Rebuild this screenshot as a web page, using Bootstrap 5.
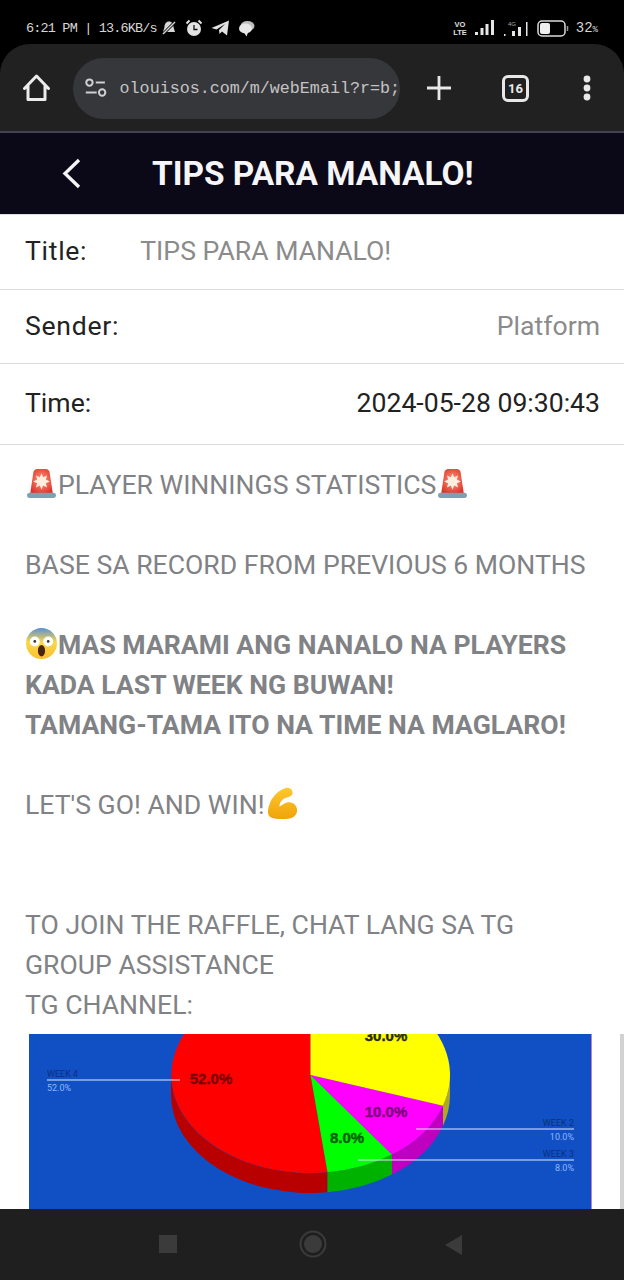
<!DOCTYPE html>
<html lang="en">
<head>
  <meta charset="UTF-8" />
  <title>TIPS PARA MANALO!</title>
  <meta name="viewport" content="width=device-width, initial-scale=1" />
  <link rel="stylesheet" href="https://cdn.jsdelivr.net/npm/bootstrap@5.3.0/dist/css/bootstrap.min.css" />
  <style>
    html, body { height: 1280px; overflow: hidden; }
    body { background: #000; font-family: Roboto, "Liberation Sans", sans-serif; }
    .phone { width: 624px; height: 1280px; }
    /* status bar */
    .status-bar { height: 44px; padding: 12px 26px 0 26px; color: #d6d6d6; font: 13.5px "Liberation Mono", monospace; }
    .status-clock { letter-spacing: -.83px; }
    /* browser toolbar */
    .browser-bar { height: 87px; background: #212121; border-radius: 30px 30px 0 0; padding: 1px 23px 0; }
    .url-pill { width: 327px; height: 61px; margin-left: 23px; background: #36373b; border-radius: 31px; padding-left: 11px; overflow: hidden; }
    .url-text { margin-left: 12px; color: #c4c4c4; font: 16.7px "Liberation Mono", monospace; white-space: nowrap; }
    .tab-count { width: 27px; height: 27px; border: 3px solid #e8e8e8; border-radius: 6px; color: #e8e8e8; font: 700 13px/21px Roboto, sans-serif; text-align: center; }
    /* app header */
    .app-header { height: 84px; background: #0b0818; border-top: 2px solid #45424f; border-bottom: 1px solid #dedde6; padding-left: 62px; }
    .app-title { margin: 0 0 0 71px; color: #f6f6f8; font: 700 33.4px Roboto, sans-serif; white-space: nowrap; }
    /* mail */
    .mail-page { background: #fff; min-height: 0; }
    .info-row { padding: 0 24px 2px 25px; border-bottom: 1px solid #dcdcdc; font-size: 26.6px; color: #222; }
    .row-title { height: 75px; }
    .row-sender { height: 74px; }
    .row-time { height: 81px; padding-bottom: 3px; }
    .wide-label { letter-spacing: .7px; }
    .title-value { margin-left: 53px; }
    .muted-value { color: #8b8b8b; }
    .mail-body { padding: 20px 20px 0 25px; color: #808285; font-size: 26.6px; line-height: 40px; white-space: nowrap; }
    .emoji { width: 33px; height: 33px; vertical-align: -6px; }
    .chart-wrap { margin: 9px 0 0 29px; width: 563px; height: 175px; }
    .chart-wrap svg { display: block; }
    .chart-name { fill: #0b2f7c; font: 9px Roboto, sans-serif; }
    .chart-val { fill: #8fb6ff; font: 9px Roboto, sans-serif; }
    .chart-pct { font: 700 15px "Liberation Sans", sans-serif; text-anchor: middle; stroke-width: .4px; }
    .scroll-thumb { right: 0; bottom: 0; width: 4px; height: 175px; background: #d2d2d2; }
    /* android nav */
    .nav-bar { height: 71px; background: #1f1f1f; }
  </style>
</head>
<body>
  <div class="phone d-flex flex-column">

    <div class="status-bar d-flex align-items-center justify-content-between">
      <div class="d-flex align-items-center">
        <span class="status-clock">6:21 PM | 13.6KB/s</span>
        <svg class="ms-1" width="16" height="16" viewBox="0 0 16 16"><path d="M8 1.500c-3 0-4.500 2.500-4.500 5.500L2 12h12l-1.500-5C12.500 4 11 1.500 8 1.500z" fill="#d6d6d6"/><path d="M2 14 14 2" stroke="#000" stroke-width="3"/><path d="M2 14 14 2" stroke="#d6d6d6" stroke-width="1.400"/></svg>
        <svg class="ms-2" width="18" height="18" viewBox="0 0 18 18"><circle cx="9" cy="10" r="7" fill="#e2e2e2"/><path d="M9 6v4.500h3.500" stroke="#111" stroke-width="1.300" fill="none"/><path d="M1.500 4.500 4.500 1.500M13.500 1.500l3 3" stroke="#e2e2e2" stroke-width="2"/></svg>
        <svg class="ms-2" width="19" height="16" viewBox="0 0 19 16"><path d="M0.500 8 18 0.500 16 15.500 11 11.500 8.500 14 8 10 14 4 5.500 9.500z" fill="#e2e2e2"/></svg>
        <svg class="ms-2" width="17" height="17" viewBox="0 0 17 17"><ellipse cx="9.500" cy="6" rx="7" ry="5" fill="#bdbdbd"/><ellipse cx="7.500" cy="8.500" rx="6.500" ry="5" fill="#e8e8e8"/><path d="M6 12.500h4L8.500 16.500z" fill="#e8e8e8"/></svg>
      </div>
      <div class="d-flex align-items-center">
        <svg width="16" height="16" viewBox="0 0 16 16"><text x="8" y="7" text-anchor="middle" fill="#e0e0e0" font-family="Liberation Sans" font-weight="700" font-size="7.500">VO</text><text x="8" y="15" text-anchor="middle" fill="#e0e0e0" font-family="Liberation Sans" font-weight="700" font-size="7.500">LTE</text></svg>
        <svg style="margin-left:7px" width="19" height="16" viewBox="0 0 19 16"><path d="M0 12h3v3H0zM5.500 8h3v7h-3zM10.500 4h3v11h-3zM16 0h3v15h-3z" fill="#e6e6e6"/></svg>
        <svg style="margin-left:9px" width="26" height="17" viewBox="0 0 26 17"><text x="5" y="6" fill="#aaa" font-family="Liberation Sans" font-size="6">4G</text><path d="M1 14h1.500v2H1zM9 11h3v5H9zM15 7h3v9h-3zM23 2h1.500v14H23z" fill="#e6e6e6"/></svg>
        <svg style="margin-left:8px" width="32" height="17" viewBox="0 0 32 17"><rect x="1" y="1" width="27" height="15" rx="4" fill="none" stroke="#dcdcdc" stroke-width="1.500"/><rect x="3" y="3" width="10" height="11" rx="2" fill="#f0f0f0"/><path d="M30.500 6v5" stroke="#999" stroke-width="1.500"/></svg>
        <span style="margin-left:7px;font-size:14px">32<small style="font-size:9px">%</small></span>
      </div>
    </div>

    <div class="browser-bar d-flex align-items-center">
      <svg width="27" height="28" viewBox="0 0 27 28"><path d="M1.500 14.500 13.500 2l12 12.500M5 12v13.500h17V12" fill="none" stroke="#ececec" stroke-width="3" stroke-linejoin="round" stroke-linecap="round"/></svg>
      <div class="url-pill d-flex align-items-center">
        <svg width="26" height="22" viewBox="0 0 26 22"><circle cx="6" cy="5" r="3.500" fill="none" stroke="#d0d0d0" stroke-width="2.200"/><path d="M13 5h10M2 16h12" stroke="#d0d0d0" stroke-width="2.200"/><circle cx="20" cy="16" r="3.500" fill="none" stroke="#d0d0d0" stroke-width="2.200"/></svg>
        <span class="url-text">olouisos.com/m/webEmail?r=b;</span>
      </div>
      <svg style="margin-left:26px" width="26" height="26" viewBox="0 0 26 26"><path d="M13 1v24M1 13h24" stroke="#e8e8e8" stroke-width="2.800"/></svg>
      <div class="tab-count" style="margin-left:50px">16</div>
      <svg style="margin-left:54px" width="8" height="26" viewBox="0 0 8 26"><circle cx="4" cy="4" r="3.400" fill="#e8e8e8"/><circle cx="4" cy="13" r="3.400" fill="#e8e8e8"/><circle cx="4" cy="22" r="3.400" fill="#e8e8e8"/></svg>
    </div>

    <div class="app-header d-flex align-items-center">
      <svg width="19" height="31" viewBox="0 0 19 31"><path d="M17 2 3 15.500 17 29" fill="none" stroke="#f4f4f4" stroke-width="3.400"/></svg>
      <h1 class="app-title">TIPS PARA MANALO!</h1>
    </div>

    <div class="mail-page flex-grow-1 position-relative overflow-hidden">
      <div class="info-row row-title d-flex align-items-center">
        <span class="wide-label">Title:</span>
        <span class="title-value muted-value">TIPS PARA MANALO!</span>
      </div>
      <div class="info-row row-sender d-flex align-items-center justify-content-between">
        <span class="wide-label">Sender:</span>
        <span class="muted-value">Platform</span>
      </div>
      <div class="info-row row-time d-flex align-items-center justify-content-between">
        <span>Time:</span>
        <span>2024-05-28 09:30:43</span>
      </div>

      <div class="mail-body">
        <svg width="0" height="0" class="position-absolute">
          <defs>
            <radialGradient id="sirenFill" cx=".5" cy=".45" r=".6"><stop offset="0" stop-color="#ff9a80"/><stop offset="1" stop-color="#df3326"/></radialGradient>
            <linearGradient id="faceFill" x1="0" y1="0" x2="0" y2="1"><stop offset="0" stop-color="#5a8fd8"/><stop offset=".45" stop-color="#f9d84a"/><stop offset="1" stop-color="#fbc02d"/></linearGradient>
            <linearGradient id="armFill" x1="0" y1="0" x2="0" y2="1"><stop offset="0" stop-color="#fdc92f"/><stop offset="1" stop-color="#f0a30a"/></linearGradient>
            <g id="sirenIcon">
              <path d="M8 6a4 4 0 0 1 4-4h8a4 4 0 0 1 4 4l3 20H5z" fill="url(#sirenFill)"/>
              <path d="M16 6l1.600 4 3.800-1.800-1.200 4 4 1.800-4 1.800 1.200 4-3.800-1.800-1.600 4-1.600-4-3.800 1.800 1.200-4-4-1.800 4-1.800-1.200-4 3.800 1.800z" fill="#ffeede"/>
              <rect x="2" y="25" width="28" height="5" rx="2.500" fill="#7f9fb2"/>
            </g>
          </defs>
        </svg>
        <svg class="emoji" viewBox="0 0 32 32" role="img" aria-label="siren"><use href="#sirenIcon"/></svg>PLAYER WINNINGS STATISTICS<svg class="emoji" viewBox="0 0 32 32" role="img" aria-label="siren"><use href="#sirenIcon"/></svg><br />
        <br />
        BASE SA RECORD FROM PREVIOUS 6 MONTHS<br />
        <br />
        <strong><svg class="emoji" viewBox="0 0 32 32" role="img" aria-label="screaming face"><circle cx="16" cy="16" r="15" fill="url(#faceFill)"/><circle cx="9.500" cy="14" r="4.800" fill="#fff"/><circle cx="22.500" cy="14" r="4.800" fill="#fff"/><circle cx="9.500" cy="14" r="1.300" fill="#333"/><circle cx="22.500" cy="14" r="1.300" fill="#333"/><ellipse cx="16" cy="23" rx="3.500" ry="5.500" fill="#4a2413"/></svg>MAS MARAMI ANG NANALO NA PLAYERS<br />
        KADA LAST WEEK NG BUWAN!<br />
        TAMANG-TAMA ITO NA TIME NA MAGLARO!</strong><br />
        <br />
        LET'S GO! AND WIN!<svg class="emoji" viewBox="0 0 32 32" role="img" aria-label="flexed biceps"><path d="M20 1C14 3 8 8 5 15 3 20 2 25 4 28c2 3 10 3 16 3 7 0 12-4 11-10-1-5-6-7-10-6-3 1-5 3-7 4 0-4 3-8 8-9 4-1 6-3 4-7-1-2-4-3-6-2z" fill="url(#armFill)"/></svg><br />
        <br />
        <br />
        TO JOIN THE RAFFLE, CHAT LANG SA TG<br />
        GROUP ASSISTANCE<br />
        TG CHANNEL:
      </div>

      <div class="chart-wrap">
        <svg width="563" height="175" viewBox="0 0 563 175">
          <rect width="563" height="175" fill="#1150c4"/>
          <rect x="562" width="1" height="175" fill="#c77ad6"/>
          <!-- side of the pie -->
          <path d="M142 41A139.500 98 0 0 0 298.500 138.300V158.300A139.500 98 0 0 1 142 61Z" fill="#b90000"/>
          <path d="M298.500 138.300A139.500 98 0 0 0 363 120.600V140.600A139.500 98 0 0 1 298.500 158.300Z" fill="#00b200"/>
          <path d="M363 120.600A139.500 98 0 0 0 414 71.700V91.700A139.500 98 0 0 1 363 140.600Z" fill="#c000c0"/>
          <path d="M414 71.700A139.500 98 0 0 0 421 41V61A139.500 98 0 0 1 414 91.700Z" fill="#b0a820"/>
          <!-- top of the pie -->
          <path d="M281.500 41V-57A139.500 98 0 1 0 298.500 138.300Z" fill="#ff0000"/>
          <path d="M281.500 41 298.500 138.300A139.500 98 0 0 0 363 120.600Z" fill="#00ff00"/>
          <path d="M281.500 41 363 120.600A139.500 98 0 0 0 414 71.700Z" fill="#ff00ff"/>
          <path d="M281.500 41 414 71.700A139.500 98 0 0 0 281.500 -57Z" fill="#ffff00"/>
          <!-- leader lines -->
          <path d="M18 46H151M387 95H545M329 126H545" stroke="#dfe9ff" stroke-width="1.200"/>
          <text class="chart-name" x="18" y="43">WEEK 4</text>
          <text class="chart-val" x="18" y="57">52.0%</text>
          <text class="chart-name" x="545" y="92" text-anchor="end">WEEK 2</text>
          <text class="chart-val" x="545" y="106" text-anchor="end">10.0%</text>
          <text class="chart-name" x="545" y="123" text-anchor="end">WEEK 3</text>
          <text class="chart-val" x="545" y="137" text-anchor="end">8.0%</text>
          <text class="chart-pct" x="182" y="50" fill="#7a0000" stroke="#7a0000">52.0%</text>
          <text class="chart-pct" x="357" y="7" fill="#2a2a00" stroke="#2a2a00">30.0%</text>
          <text class="chart-pct" x="357" y="83" fill="#7a007a" stroke="#7a007a">10.0%</text>
          <text class="chart-pct" x="318" y="109" fill="#006000" stroke="#006000">8.0%</text>
        </svg>
      </div>
      <div class="scroll-thumb position-absolute"></div>
    </div>

    <div class="nav-bar d-flex align-items-center position-relative">
      <svg class="position-absolute" style="left:159px;top:26px" width="18" height="18" viewBox="0 0 18 18"><rect width="18" height="18" fill="#3b3b3b"/></svg>
      <svg class="position-absolute" style="left:299px;top:21px" width="28" height="28" viewBox="0 0 28 28"><circle cx="14" cy="14" r="12.500" fill="none" stroke="#3b3b3b" stroke-width="2"/><circle cx="14" cy="14" r="9" fill="#3b3b3b"/></svg>
      <svg class="position-absolute" style="left:445px;top:26px" width="17" height="20" viewBox="0 0 17 20"><path d="M17 0V20L0 10Z" fill="#3b3b3b"/></svg>
    </div>
  </div>
  <script src="https://cdn.jsdelivr.net/npm/bootstrap@5.3.0/dist/js/bootstrap.bundle.min.js"></script>
</body>
</html>
